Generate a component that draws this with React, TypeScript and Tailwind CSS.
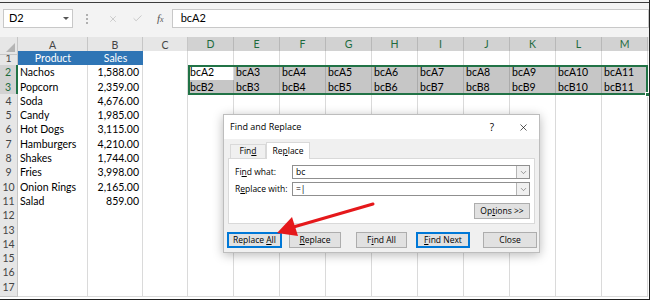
import { X, Check, ChevronDown } from 'lucide-react';

const colLetters = ['A', 'B', 'C', 'D', 'E', 'F', 'G', 'H', 'I', 'J', 'K', 'L', 'M'];

const products: Array<[string, string]> = [
  ['Nachos', '1,588.00'],
  ['Popcorn', '2,359.00'],
  ['Soda', '4,676.00'],
  ['Candy', '1,985.00'],
  ['Hot Dogs', '3,115.00'],
  ['Hamburgers', '4,210.00'],
  ['Shakes', '1,744.00'],
  ['Fries', '3,998.00'],
  ['Onion Rings', '2,165.00'],
  ['Salad', '859.00']
];

const gridCols = 'grid grid-cols-[18px_70px_55px_45px_repeat(10,46px)]';

function HeaderRow() {
  return (
    <div className={`${gridCols} h-[14px] bg-[#e6e6e6]`}>
      <div className="relative border-r border-b border-[#c6c6c6]">
        <div className="absolute right-[2px] bottom-[2px] w-0 h-0 border-l-[9px] border-l-transparent border-b-[9px] border-b-[#b4b4b4]" />
      </div>
      {colLetters.map((l, i) => {
        const sel = i >= 3;
        return (
          <div
            key={l}
            className={`flex items-center justify-center text-[10.5px] border-r ${
              sel
                ? 'bg-[#d2d2d2] text-[#1d6b3e] border-r-[#b8b8b8] border-b-2 border-b-[#217346]'
                : 'text-[#444] border-r-[#c6c6c6] border-b border-b-[#c6c6c6]'
            }`}
          >
            {l}
          </div>
        );
      })}
    </div>
  );
}

function DataRow({ n }: { n: number }) {
  const selRow = n === 2 || n === 3;
  const item = n >= 2 && n <= 11 ? products[n - 2] : null;
  const cells = [];
  for (let c = 0; c < 13; c++) {
    const letter = colLetters[c];
    let content: React.ReactNode = null;
    let cls = 'border-r border-b border-[#dadada] bg-white';
    if (n === 1 && c === 0) {
      content = 'Product';
      cls = 'bg-[#2f75b5] text-white justify-center border-b border-[#dadada]';
    } else if (n === 1 && c === 1) {
      content = 'Sales';
      cls = 'bg-[#2f75b5] text-white justify-center border-b border-[#dadada]';
    } else if (item && c === 0) {
      content = item[0];
      cls += ' pl-[2px]';
    } else if (item && c === 1) {
      content = item[1];
      cls += ' justify-end pr-[3px]';
    } else if (selRow && c >= 3) {
      content = `bc${n === 2 ? 'A' : 'B'}${c - 1}`;
      const active = n === 2 && c === 3;
      cls = `border-r border-b pl-[2px] ${active ? 'bg-white border-[#dadada]' : 'bg-[#c6c6c6] border-[#ababab]'}`;
    }
    cells.push(
      <div key={letter} className={`flex items-center overflow-hidden whitespace-nowrap text-[10.5px] text-black ${cls}`}>
        {content}
      </div>
    );
  }
  return (
    <div className={`${gridCols} h-[14.3px]`}>
      <div
        className={`flex items-center justify-center text-[10.5px] border-b ${
          selRow
            ? 'bg-[#d2d2d2] text-[#1d6b3e] border-b-[#b8b8b8] border-r-2 border-r-[#217346]'
            : 'bg-[#e6e6e6] text-[#444] border-b-[#c6c6c6] border-r border-r-[#c6c6c6]'
        }`}
      >
        {n}
      </div>
      {cells}
    </div>
  );
}

function U({ children }: { children: React.ReactNode }) {
  return <span className="underline underline-offset-[1px]">{children}</span>;
}

function DlgButton({ children, w, focus }: { children: React.ReactNode; w: string; focus?: boolean }) {
  return (
    <div
      className={`${w} h-[16px] flex items-center justify-center text-[8.5px] text-black bg-[#e1e1e1] border whitespace-pre ${
        focus ? 'border-[#0078d7] shadow-[inset_0_0_0_1px_#0078d7]' : 'border-[#adadad]'
      }`}
    >
      <span>{children}</span>
    </div>
  );
}

function Dialog() {
  return (
    <div className="absolute left-[223px] top-[114px] w-[317px] h-[139px] bg-[#f0f0f0] border border-[#bdbdbd] shadow-[0_2px_10px_rgba(0,0,0,0.28)] flex flex-col font-['Open_Sans',sans-serif]">
      {/* Title */}
      <div className="h-[24px] bg-white flex items-center pl-[6px] pr-[10px] text-[9px] text-black">
        <span>Find and Replace</span>
        <span className="ml-auto mr-[24px] text-[10px]">?</span>
        <X className="w-[11px] h-[11px] text-black" strokeWidth={1.4} />
      </div>

      {/* Tabs */}
      <div className="h-[19px] flex items-end pl-[6px]">
        <div className="h-[14px] w-[36px] flex items-center justify-center text-[8.5px] border border-b-0 border-[#d9d9d9] bg-[#f0f0f0]">
          <span>Fin<U>d</U></span>
        </div>
        <div className="h-[17px] w-[44px] flex items-center justify-center text-[8.5px] border border-b-0 border-[#d9d9d9] bg-white -mb-px relative z-10">
          <span>Re<U>p</U>lace</span>
        </div>
      </div>

      {/* Panel */}
      <div className="mx-[4px] h-[66px] bg-white border border-[#d9d9d9] relative pt-[6px] pl-[6px] pr-[4px] flex flex-col">
        <div className="flex items-center h-[14px] text-[8.5px]">
          <span className="w-[57px]">Fi<U>n</U>d what:</span>
          <div className="flex-1 h-[14px] border border-[#8f8f8f] flex items-center pl-[3px]">
            <span className="flex-1">bc</span>
            <div className="w-[13px] h-full border-l border-[#b5b5b5] bg-[#f0f0f0] flex items-center justify-center">
              <ChevronDown className="w-[9px] h-[9px] text-[#555]" strokeWidth={1.5} />
            </div>
          </div>
        </div>
        <div className="flex items-center h-[14px] mt-[3px] text-[8.5px]">
          <span className="w-[57px]">R<U>e</U>place with:</span>
          <div className="flex-1 h-[14px] border border-[#8f8f8f] flex items-center pl-[3px]">
            <span className="flex-1">=|</span>
            <div className="w-[13px] h-full border-l border-[#b5b5b5] bg-[#f0f0f0] flex items-center justify-center">
              <ChevronDown className="w-[9px] h-[9px] text-[#555]" strokeWidth={1.5} />
            </div>
          </div>
        </div>
        <div className="flex justify-end mt-[7px]">
          <DlgButton w="w-[56px]">
            Op<U>t</U>ions &gt;&gt;
          </DlgButton>
        </div>
      </div>

      {/* Buttons */}
      <div className="flex items-center mt-[8px] pl-[3px]">
        <DlgButton w="w-[55px]" focus>
          Replace <U>A</U>ll
        </DlgButton>
        <div className="w-[7px]" />
        <DlgButton w="w-[52px]">
          <U>R</U>eplace
        </DlgButton>
        <div className="w-[15px]" />
        <DlgButton w="w-[51px]">
          F<U>i</U>nd All
        </DlgButton>
        <div className="w-[9px]" />
        <DlgButton w="w-[54px]" focus>
          <U>F</U>ind Next
        </DlgButton>
        <div className="w-[13px]" />
        <DlgButton w="w-[54px]">Close</DlgButton>
      </div>
    </div>
  );
}

export default function App() {
  const rows = Array.from({ length: 17 }, (_, i) => i + 1);
  return (
    <div className="relative w-[650px] h-[300px] overflow-hidden bg-white border-r border-b border-[#222] font-['Lato',sans-serif]">
      {/* ribbon edge */}
      <div className="h-[3px] bg-[#f3f3f3] border-b border-[#3c3c3c]" />

      {/* Formula bar */}
      <div className="h-[31px] bg-[#f3f3f3] flex items-center">
        <div className="ml-[3px] w-[70px] h-[19px] bg-white border border-[#c8c8c8] flex items-center pl-[5px] pr-[3px] text-[11px] text-black">
          <span className="flex-1">D2</span>
          <div className="w-0 h-0 border-l-[3px] border-r-[3px] border-t-[3px] border-l-transparent border-r-transparent border-t-[#555]" />
        </div>
        <div className="ml-[13px] w-[2px] flex flex-col gap-[2px]">
          <div className="w-[2px] h-[2px] bg-[#b0b0b0]" />
          <div className="w-[2px] h-[2px] bg-[#b0b0b0]" />
          <div className="w-[2px] h-[2px] bg-[#b0b0b0]" />
        </div>
        <X className="ml-[20px] w-[10px] h-[10px] text-[#b8b8b8]" strokeWidth={1.6} />
        <Check className="ml-[14px] w-[11px] h-[11px] text-[#b8b8b8]" strokeWidth={1.6} />
        <span className="ml-[14px] text-[11px] italic text-[#555] font-['Liberation_Serif',serif]">
          f<span className="text-[8px]">x</span>
        </span>
        <div className="ml-[8px] flex-1 h-[19px] bg-white border border-[#c8c8c8] flex items-center pl-[8px] text-[11px] text-black">
          bcA2
        </div>
      </div>

      <div className="h-[3px] bg-[#f3f3f3]" />

      {/* Grid */}
      <div className="relative">
        <HeaderRow />
        {rows.map((n) => (
          <DataRow key={n} n={n} />
        ))}
        {/* selection outline */}
        <div className="absolute left-[188px] top-[27.5px] w-[460px] h-[30px] border-2 border-[#217346] pointer-events-none" />
        <div className="absolute left-[645px] top-[55px] w-[5px] h-[5px] bg-[#217346] border border-white" />
      </div>

      <Dialog />

      {/* red arrow */}
      <svg className="absolute left-0 top-0 pointer-events-none" width="650" height="300" viewBox="0 0 650 300">
        <line x1="373" y1="204" x2="290" y2="228" stroke="#e5181b" strokeWidth="3" strokeLinecap="round" />
        <polygon points="277,233 292,217 298,236" fill="#e5181b" />
      </svg>
    </div>
  );
}
